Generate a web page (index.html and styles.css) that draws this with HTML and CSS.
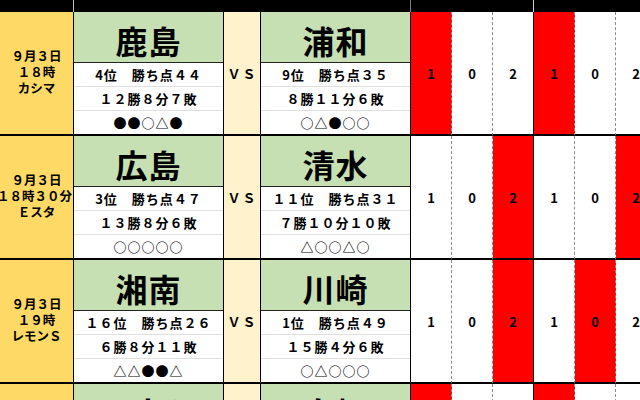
FILE: index.html
```html
<!DOCTYPE html>
<html lang="ja">
<head>
<meta charset="utf-8">
<title>試合予想</title>
<link rel="stylesheet" href="styles.css">
</head>
<body>
<div class="sheet">
  <div class="hd hd-date"></div>
  <div class="hd hd-teams"></div>
  <div class="hd hd-g1"></div>
  <div class="hd hd-g2"></div>

  <div class="date"><span>９月３日</span><span>１８時</span><span>カシマ</span></div>
  <div class="team"><div class="name">鹿島</div><div class="sub">4位　勝ち点４４</div><div class="sub">１２勝８分７敗</div><div class="sub last">●●○△●</div></div>
  <div class="vs">ＶＳ</div>
  <div class="team"><div class="name">浦和</div><div class="sub">9位　勝ち点３５</div><div class="sub">８勝１１分６敗</div><div class="sub last">○△●○○</div></div>
  <div class="sc red">1</div><div class="sc">0</div><div class="sc end">2</div>
  <div class="sc red">1</div><div class="sc">0</div><div class="sc end">2</div>

  <div class="date"><span>９月３日</span><span class="wide">１８時３０分</span><span>Ｅスタ</span></div>
  <div class="team"><div class="name">広島</div><div class="sub">3位　勝ち点４７</div><div class="sub">１３勝８分６敗</div><div class="sub last">○○○○○</div></div>
  <div class="vs">ＶＳ</div>
  <div class="team"><div class="name">清水</div><div class="sub">１１位　勝ち点３１</div><div class="sub">７勝１０分１０敗</div><div class="sub last">△○○△○</div></div>
  <div class="sc">1</div><div class="sc">0</div><div class="sc end red">2</div>
  <div class="sc">1</div><div class="sc">0</div><div class="sc end red">2</div>

  <div class="date"><span>９月３日</span><span>１９時</span><span>レモンＳ</span></div>
  <div class="team"><div class="name">湘南</div><div class="sub">１６位　勝ち点２６</div><div class="sub">６勝８分１１敗</div><div class="sub last">△△●●△</div></div>
  <div class="vs">ＶＳ</div>
  <div class="team"><div class="name">川崎</div><div class="sub">1位　勝ち点４９</div><div class="sub">１５勝４分６敗</div><div class="sub last">○△○○○</div></div>
  <div class="sc">1</div><div class="sc">0</div><div class="sc end red">2</div>
  <div class="sc">1</div><div class="sc red">0</div><div class="sc end">2</div>

  <div class="date"><span>９月３日</span><span>１９時</span><span>ヨドコウ</span></div>
  <div class="team"><div class="name">Ｃ大阪</div><div class="sub">5位　勝ち点４２</div><div class="sub">１１勝９分６敗</div><div class="sub last">○●○△○</div></div>
  <div class="vs">ＶＳ</div>
  <div class="team"><div class="name">鳥栖</div><div class="sub">8位　勝ち点３６</div><div class="sub">８勝１２分６敗</div><div class="sub last">△○●△●</div></div>
  <div class="sc red">1</div><div class="sc">0</div><div class="sc end">2</div>
  <div class="sc red">1</div><div class="sc">0</div><div class="sc end">2</div>
</div>
</body>
</html>
```
FILE: styles.css
```css
html, body {
  margin: 0;
  padding: 0;
  background: #fff;
  overflow: hidden;
  width: 640px;
  height: 400px;
}

.sheet {
  display: grid;
  grid-template-columns: 74px 150px 37px 150px repeat(6, 41px);
  grid-template-rows: 12px repeat(4, 124px);
  font-family: "Noto Sans CJK JP", "DejaVu Sans", sans-serif;
  font-weight: 700;
  color: #000;
  width: 657px;
}

.hd {
  background: #000;
  box-sizing: border-box;
  border-right: 1px solid #bfbfbf;
}
.hd-teams { grid-column: 2 / 5; border-right-color: #7f7f7f; }
.hd-g1 { grid-column: 5 / 8; border-right-color: #d0d0d0; }
.hd-g2 { grid-column: 8 / 11; }

.date, .team, .vs, .sc {
  box-sizing: border-box;
  border-bottom: 2px solid #000;
  border-right: 1px solid #000;
}

.date {
  background: #ffd966;
  display: flex;
  flex-direction: column;
  align-items: center;
  justify-content: center;
  font-size: 12.5px;
  line-height: 16px;
  padding-bottom: 2px;
  overflow: visible;
  white-space: nowrap;
}
.date .wide {
  margin-left: -4px;
}

.team {
  display: flex;
  flex-direction: column;
}
.name {
  background: #c6e0b4;
  height: 51px;
  box-sizing: border-box;
  border-bottom: 1px solid #222;
  display: flex;
  align-items: center;
  justify-content: center;
  font-size: 32px;
  line-height: 1;
  padding-top: 5px;
  letter-spacing: 1px;
}
.sub {
  flex: 1;
  display: flex;
  align-items: center;
  justify-content: center;
  font-size: 13px;
  letter-spacing: 1px;
  border-bottom: 1px solid #e0e0e0;
  background: #fff;
  white-space: nowrap;
}
.sub.last { border-bottom: none; }

.vs {
  background: #fff2cc;
  display: flex;
  align-items: center;
  justify-content: center;
  font-size: 13px;
  letter-spacing: 2px;
  padding-left: 1px;
}

.sc {
  background: #fff;
  display: flex;
  align-items: center;
  justify-content: center;
  font-size: 13px;
  border-right: 1px dashed #8c8c8c;
}
.sc.end { border-right: 1px solid #000; }
.sc.red { background: #ff0000; }
```
